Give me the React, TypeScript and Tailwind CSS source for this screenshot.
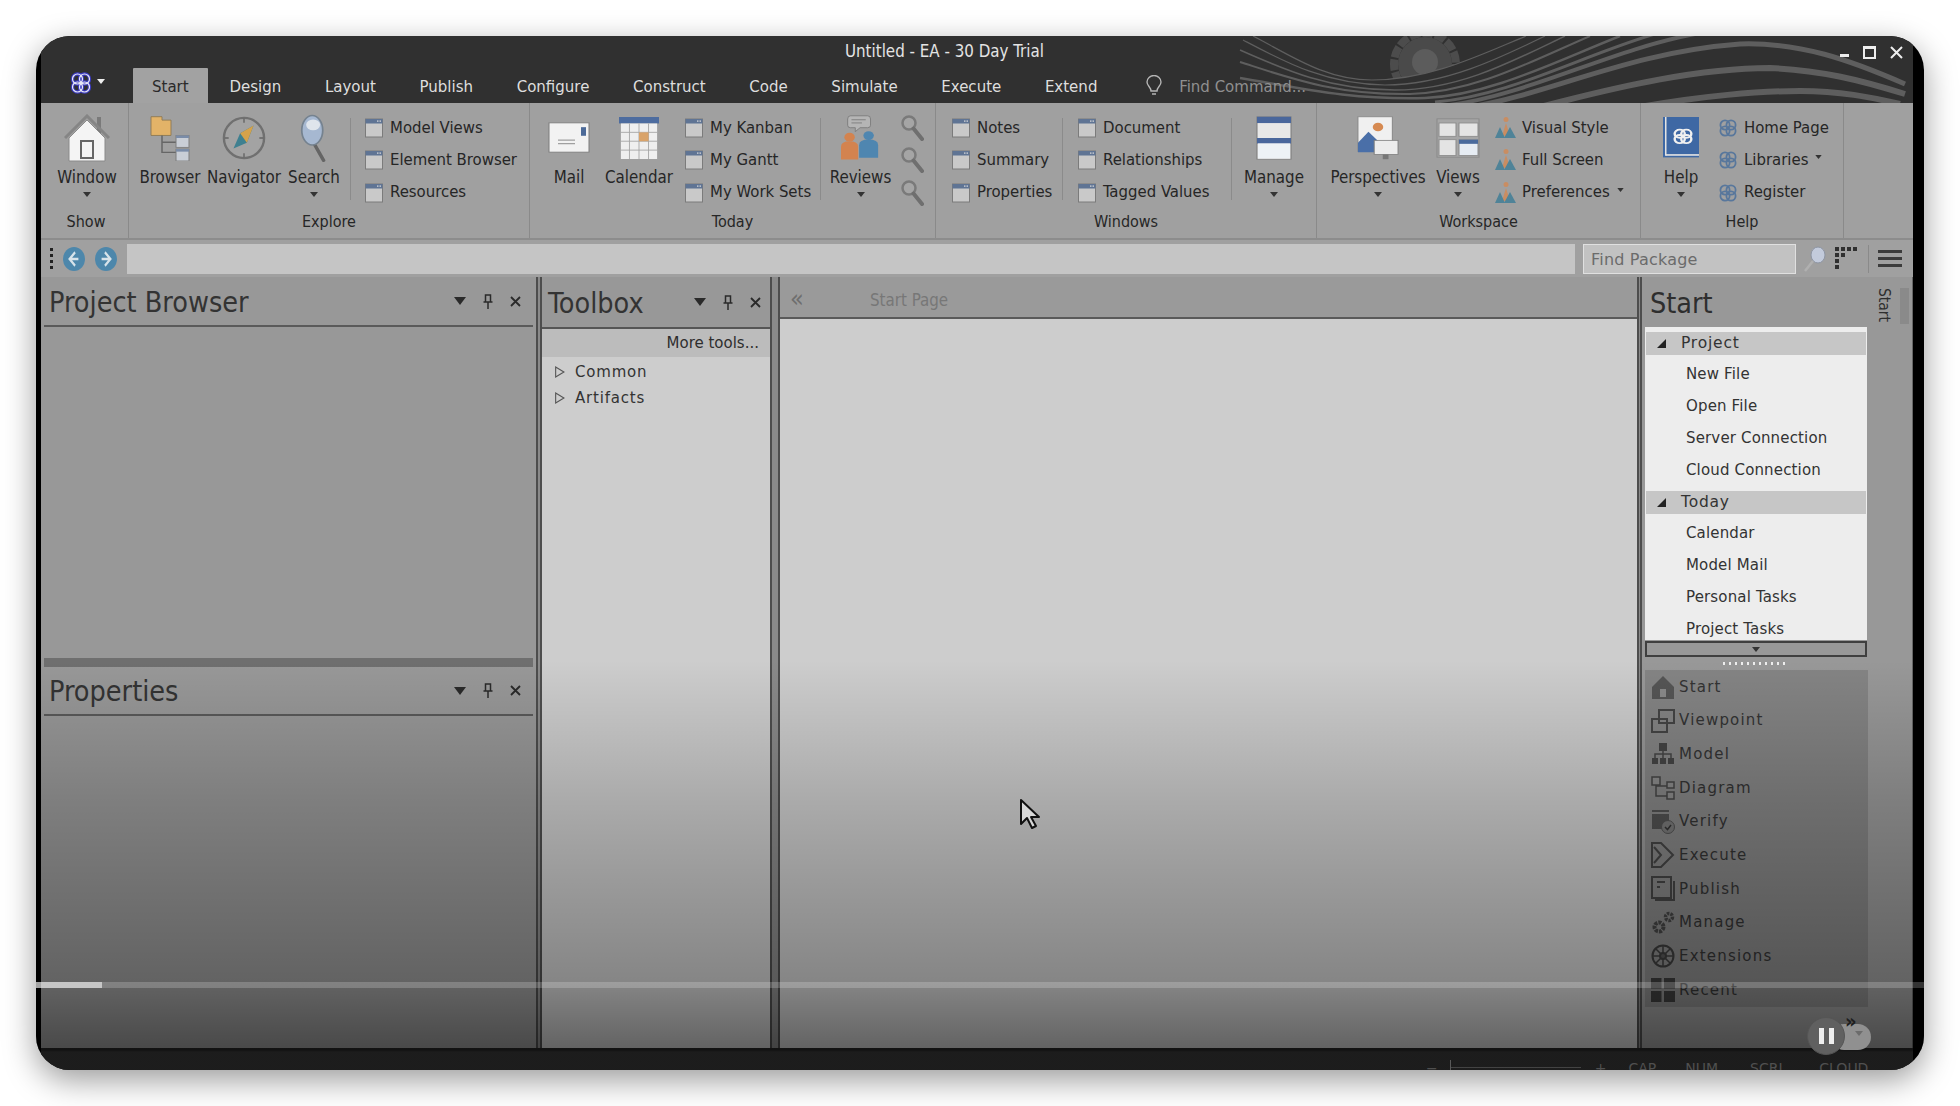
import React from "react";

const F = "font-['DejaVu_Sans_Condensed','DejaVu_Sans',sans-serif]";

const Logo = ({ s = 20, c = "#3d3fa8", bg = "none", w = 2 }: { s?: number; c?: string; bg?: string; w?: number }) => (
  <svg width={s} height={s} viewBox="0 0 20 20" fill={bg} stroke={c} strokeWidth={w}>
    <circle cx="7" cy="7" r="4.6" />
    <circle cx="13" cy="7" r="4.6" />
    <circle cx="7" cy="13" r="4.6" />
    <circle cx="13" cy="13" r="4.6" />
  </svg>
);

const AppLogo = () => (
  <svg width="22" height="24" viewBox="0 0 22 24" fill="none">
    <g stroke="#3c3cc0" strokeWidth="3.4">
      <circle cx="7.5" cy="8" r="5" /><circle cx="14.5" cy="8" r="5" /><circle cx="7.5" cy="16" r="5" /><circle cx="14.5" cy="16" r="5" />
    </g>
    <g stroke="#e8e8f4" strokeWidth="1.2">
      <circle cx="7.5" cy="8" r="5" /><circle cx="14.5" cy="8" r="5" /><circle cx="7.5" cy="16" r="5" /><circle cx="14.5" cy="16" r="5" />
    </g>
  </svg>
);

const WinIcon = () => (
  <svg width="18" height="20" viewBox="0 0 18 20" className="shrink-0">
    <rect x="0.5" y="1" width="17" height="18" fill="#c9c9c9" stroke="#7b7b7b" />
    <rect x="0.5" y="1" width="17" height="4.5" fill="#5f7494" />
    <rect x="12" y="2.5" width="1.5" height="1.2" fill="#ddd" />
    <rect x="14.5" y="2.5" width="1.5" height="1.2" fill="#ddd" />
  </svg>
);

const PersonIcon = () => (
  <svg width="21" height="24" viewBox="0 0 21 24" className="shrink-0">
    <circle cx="11" cy="3.5" r="2.5" fill="#c98d62" />
    <path d="M7 20 L11 7 L15 20Z" fill="#c98d62" />
    <path d="M0 22 L5 11 L10 22Z" fill="#4f8398" />
    <path d="M9 22 L15 11 L21 22Z" fill="#4f8398" />
  </svg>
);

const MagIcon = ({ w = 24, h = 28 }: { w?: number; h?: number }) => (
  <svg width={w} height={h} viewBox="0 0 24 28" fill="none">
    <circle cx="9" cy="9" r="6.5" stroke="#7a7a7a" strokeWidth="2.5" fill="#a5a5a5" />
    <path d="M13.5 14.5 L22 25" stroke="#6f6f6f" strokeWidth="4" strokeLinecap="round" />
  </svg>
);

const Caret = ({ c = "#333", s = 8 }: { c?: string; s?: number }) => (
  <svg width={s} height={s - 3} viewBox="0 0 8 5"><path d="M0 0H8L4 5Z" fill={c} /></svg>
);

const House = () => (
  <svg width="46" height="48" viewBox="0 0 46 48">
    <rect x="33" y="3" width="4" height="16" fill="#7a7a7a" />
    <path d="M1 24 L23 2 L45 24" fill="none" stroke="#858585" strokeWidth="3" />
    <path d="M5 24 L23 6 L41 24 V47 H5Z" fill="#f4f4f4" stroke="#8a8a8a" />
    <rect x="17" y="27" width="12" height="17" fill="#f4f4f4" stroke="#666" strokeWidth="2" />
  </svg>
);
const FolderTree = () => (
  <svg width="40" height="46" viewBox="0 0 40 54" preserveAspectRatio="none">
    <path d="M1 2H12V6H21V24H1Z" fill="#e3b368" stroke="#8e7a55" />
    <path d="M12 24V44H26M12 32H26" fill="none" stroke="#666" strokeWidth="1.5" />
    <rect x="26" y="24" width="13" height="14" fill="#c9ced6" stroke="#7c7c7c" />
    <rect x="26" y="40" width="13" height="14" fill="#c9ced6" stroke="#7c7c7c" />
    <rect x="26" y="24" width="13" height="3" fill="#7a8ca8" />
    <rect x="26" y="40" width="13" height="3" fill="#7a8ca8" />
  </svg>
);
const Compass = () => (
  <svg width="44" height="46" viewBox="0 0 46 48">
    <circle cx="23" cy="24" r="21" fill="#a3a3a3" stroke="#707070" strokeWidth="2.5" />
    <path d="M33 11 L26 29 L12 35 L19 19Z" fill="#3f8090" />
    <path d="M33 11 L26 29 L19 19Z" fill="#d6a24a" />
    <path d="M23 4V8M23 40V44M3 24H7M39 24H43" stroke="#666" strokeWidth="1.5" />
  </svg>
);
const BigMag = () => (
  <svg width="28" height="48" viewBox="0 0 32 62" preserveAspectRatio="none">
    <path d="M17 40 L27 60" stroke="#656565" strokeWidth="4" strokeLinecap="round" />
    <ellipse cx="14" cy="21" rx="12" ry="19" fill="#a6b8d1" stroke="#75828f" strokeWidth="2" />
    <ellipse cx="15" cy="14" rx="8" ry="7" fill="#dfe5ec" />
  </svg>
);
const Mail = () => (
  <svg width="42" height="31" viewBox="0 0 42 36" preserveAspectRatio="none">
    <rect x="1" y="1" width="40" height="34" fill="#f2f2f2" stroke="#7c7c7c" />
    <rect x="33" y="6" width="5" height="10" fill="#4c6a98" />
    <path d="M10 21H27M10 25H27" stroke="#a0a0a0" strokeWidth="1.5" />
  </svg>
);
const Calendar = () => (
  <svg width="40" height="42" viewBox="0 0 42 52" preserveAspectRatio="none">
    <rect x="0" y="0" width="42" height="8" fill="#4d6c9f" />
    <rect x="2" y="8" width="38" height="44" fill="#efefef" />
    <path d="M2 19H40M2 30H40M2 41H40M11 8V52M21 8V52M31 8V52" stroke="#a4a4a4" />
    <rect x="21" y="19" width="10" height="11" fill="#d9a36a" />
  </svg>
);
const Reviews = () => (
  <svg width="40" height="46" viewBox="0 0 42 58" preserveAspectRatio="none">
    <path d="M10 1H28Q31 1 31 5V13Q31 16 28 16H20L15 21V16H10Q7 16 7 13V5Q7 1 10 1Z" fill="#b5b5b5" stroke="#7a7a7a" />
    <path d="M11 6H26M11 10H22" stroke="#7a7a7a" />
    <circle cx="9" cy="28" r="5.5" fill="#d3834f" />
    <path d="M0 56V40Q0 33 9 33Q18 33 18 40V56Z" fill="#d3834f" />
    <circle cx="29" cy="26" r="5.5" fill="#4f86b0" />
    <path d="M19 54V38Q19 31 29 31Q39 31 39 38V54Z" fill="#4f86b0" />
  </svg>
);
const Manage = () => (
  <svg width="36" height="44" viewBox="0 0 36 56" preserveAspectRatio="none">
    <rect x="1" y="1" width="34" height="54" fill="#e8e8e8" stroke="#7a7a7a" />
    <rect x="1" y="1" width="34" height="8" fill="#4a679c" />
    <rect x="1" y="28" width="34" height="7" fill="#4a679c" />
    <rect x="2" y="35" width="32" height="19" fill="#eef2f6" />
  </svg>
);
const Perspectives = () => (
  <svg width="42" height="44" viewBox="0 0 44 56" preserveAspectRatio="none">
    <rect x="1" y="1" width="36" height="44" fill="#f0f0f0" stroke="#858585" />
    <circle cx="22" cy="14" r="5.5" fill="#d68a52" />
    <path d="M1 46V34L12 20L24 34V46Z" fill="#4a6fa8" />
    <rect x="18" y="31" width="25" height="18" fill="#ececec" stroke="#7d7d7d" />
    <rect x="27" y="49" width="6" height="6" fill="#777" />
  </svg>
);
const Views = () => (
  <svg width="44" height="40" viewBox="0 0 44 48" preserveAspectRatio="none">
    <rect x="1" y="1" width="42" height="46" fill="#a6a6a6" stroke="#888" />
    <rect x="3" y="6" width="17" height="16" fill="#e4e4e4" stroke="#8a8a8a" />
    <rect x="23" y="6" width="19" height="16" fill="#e4e4e4" stroke="#8a8a8a" />
    <rect x="3" y="26" width="17" height="19" fill="#e4e4e4" stroke="#8a8a8a" />
    <rect x="23" y="26" width="19" height="19" fill="#e6ecf3" stroke="#8a8a8a" />
    <rect x="23" y="26" width="19" height="5" fill="#4a6a9c" />
  </svg>
);
const HelpBook = () => (
  <svg width="36" height="42" viewBox="0 0 36 52" preserveAspectRatio="none">
    <rect x="0" y="0" width="36" height="50" fill="#3e68a4" />
    <rect x="3" y="46" width="33" height="2" fill="#e4e4e4" />
    <rect x="2" y="0" width="1.5" height="48" fill="#e4e4e4" />
    <g transform="translate(9,13)"><Logo s={22} c="#f0f0f0" w={2.2} /></g>
  </svg>
);

const Large = ({ label, icon, caret, w }: { label: string; icon: React.ReactNode; caret?: boolean; w: string }) => (
  <div className={`flex flex-col items-center shrink-0 ${w}`}>
    <div className="h-[59px] flex items-center justify-center">{icon}</div>
    <div className="text-[16.8px] leading-[20px] text-[#262626] whitespace-nowrap">{label}</div>
    {caret && <div className="mt-[5px]"><Caret /></div>}
  </div>
);

const Sep = ({ ml }: { ml: string }) => <div className={`w-px h-[82px] mt-[10px] bg-[#8b8b8b] shrink-0 ${ml}`} />;

const Small = ({ items, icon, cls, gap = "gap-[7px]" }: { items: string[]; icon: React.ReactNode; cls: string; gap?: string }) => (
  <div className={`flex flex-col pt-[4px] shrink-0 ${cls}`}>
    {items.map((t) => (
      <div key={t} className={`h-[32.3px] flex items-center ${gap} text-[16.6px] text-[#262626] whitespace-nowrap`}>
        {icon}
        <span>{t.replace(" ▾", "")}</span>
        {t.endsWith("▾") && <span className="ml-[1px] mb-[6px]"><Caret s={7} /></span>}
      </div>
    ))}
  </div>
);

const Group = ({ w, label, children }: { w: string; label: string; children: React.ReactNode }) => (
  <div className={`flex flex-col h-[135px] border-r border-[#8a8a8a] shrink-0 ${w}`}>
    <div className="flex h-[109px] pt-[5px]">{children}</div>
    <div className="text-center text-[16px] leading-[20px] text-[#262626]">{label}</div>
  </div>
);

const PanelHead = ({ title, line = true, cls, pr = "pr-[12px]" }: { title: string; line?: boolean; cls: string; pr?: string }) => (
  <div className={`flex items-center shrink-0 ${line ? "border-b-2 border-[#5a5a5a]" : ""} ${cls}`}>
    <span className="text-[28.5px] text-[#333] pl-[5px] leading-none pt-[4px]">{title}</span>
    <div className={`ml-auto flex items-center gap-[17px] text-[#222] ${pr}`}>
      <svg width="12" height="8" viewBox="0 0 12 8"><path d="M0 0H12L6 8Z" fill="#2a2a2a" /></svg>
      <svg width="10" height="15" viewBox="0 0 10 15" fill="none" stroke="#2a2a2a" strokeWidth="1.5"><path d="M2.5 1H7.5V8H2.5ZM0.5 8H9.5M5 8V15" /></svg>
      <svg width="11" height="11" viewBox="0 0 11 11" stroke="#2a2a2a" strokeWidth="1.8"><path d="M1 1L10 10M10 1L1 10" /></svg>
    </div>
  </div>
);

const VSep = ({ w }: { w: string }) => (
  <div className={`shrink-0 bg-[#8a8a8a] border-x-2 border-[#4d4d4d] ${w}`} />
);

const Tri = () => (
  <svg width="11" height="12" viewBox="0 0 10 10" fill="none" stroke="#555" strokeWidth="1"><path d="M1.5 0.5L9 5L1.5 9.5Z" /></svg>
);

const Corner = () => (
  <svg width="9" height="9" viewBox="0 0 9 9"><path d="M9 0V9H0Z" fill="#222" /></svg>
);

const navIcons: Record<string, React.ReactNode> = {
  Start: (
    <svg width="24" height="24" viewBox="0 0 24 24"><path d="M1 12L12 1L23 12V24H1Z" fill="#555" /><rect x="9" y="14" width="6" height="8" fill="#8a8a8a" /></svg>
  ),
  Viewpoint: (
    <svg width="24" height="24" viewBox="0 0 24 24" fill="none" stroke="#444" strokeWidth="2"><rect x="8" y="1" width="15" height="13" /><rect x="1" y="10" width="15" height="13" /></svg>
  ),
  Model: (
    <svg width="24" height="22" viewBox="0 0 24 22" fill="#444"><rect x="8" y="0" width="8" height="8" /><rect x="1" y="15" width="6" height="6" /><rect x="9" y="15" width="6" height="6" /><rect x="17" y="15" width="6" height="6" /><path d="M4 15V11H20V15M12 8V15" fill="none" stroke="#444" strokeWidth="1.5" /></svg>
  ),
  Diagram: (
    <svg width="24" height="24" viewBox="0 0 24 24" fill="#8a8a8a" stroke="#444" strokeWidth="1.5"><rect x="1" y="1" width="8" height="8" /><rect x="16" y="6" width="7" height="6" /><rect x="16" y="16" width="7" height="7" /><path d="M5 9V20H16M5 10H16" fill="none" /></svg>
  ),
  Verify: (
    <svg width="24" height="24" viewBox="0 0 24 24"><rect x="1" y="4" width="17" height="15" fill="#505050" /><rect x="1" y="0" width="17" height="2" fill="#505050" /><circle cx="17" cy="17" r="6.5" fill="#777" stroke="#505050" /><path d="M14 17L16.5 19.5L20 15" fill="none" stroke="#333" strokeWidth="1.5" /></svg>
  ),
  Execute: (
    <svg width="24" height="26" viewBox="0 0 24 26" fill="none" stroke="#444" strokeWidth="2"><path d="M1 1H10L22 13L10 25H1Z" /><path d="M3 5L10 13L3 21" /></svg>
  ),
  Publish: (
    <svg width="24" height="26" viewBox="0 0 24 26" fill="none" stroke="#444" strokeWidth="2"><rect x="1" y="1" width="19" height="21" /><path d="M4 24H23V5M6 6H14M6 11H9" /></svg>
  ),
  Manage: (
    <svg width="24" height="24" viewBox="0 0 24 24" fill="none" stroke="#444"><circle cx="8" cy="16" r="4.5" strokeWidth="4" strokeDasharray="3 1" /><circle cx="18" cy="6" r="3.5" strokeWidth="3.5" strokeDasharray="2.5 1" /></svg>
  ),
  Extensions: (
    <svg width="24" height="24" viewBox="0 0 24 24" fill="none" stroke="#3c3c3c" strokeWidth="2"><circle cx="12" cy="12" r="10.5" /><path d="M5 5L19 19M19 5L5 19M12 2V22M2 12H22" strokeWidth="1.5" /><circle cx="12" cy="12" r="3" fill="#555" /></svg>
  ),
  Recent: (
    <svg width="24" height="24" viewBox="0 0 24 24" fill="#3c3c3c"><rect x="0" y="0" width="10.5" height="10.5" /><rect x="13" y="0" width="11" height="10.5" /><rect x="0" y="13" width="10.5" height="11" /><rect x="13" y="13" width="11" height="11" /></svg>
  ),
};

export default function App() {
  return (
    <div className="w-[1960px] h-[1106px] bg-white pt-[36px] pl-[36px] overflow-hidden">
      <div className={`relative w-[1888px] h-[1034px] rounded-[34px] overflow-hidden bg-black pl-[5px] pr-[11px] shadow-[0_10px_32px_rgba(0,0,0,0.4)] ${F}`}>
        <div className="relative bg-[#303030] h-[67px] pl-[0px] pr-[0px]">
          <svg className="absolute -left-[0px] top-0" width="1872" height="67" viewBox="41 36 1872 67" fill="none">
            <circle cx="1425" cy="64" r="31" fill="none" stroke="#4c4c4c" strokeWidth="8" strokeDasharray="11 2" />
            <circle cx="1425" cy="64" r="27" fill="#4a4a4a" />
            <circle cx="1425" cy="62" r="13" fill="#5c5c5c" />
            <path d="M1372 80 C1430 80 1480 55 1526 36 V103 H1372Z" fill="#303030" />
            <g stroke="#5e5e5e">
              <path strokeWidth="1.2" d="M1253 36 C1290 55 1325 80 1372 80 C1430 80 1480 55 1526 36" />
              <path strokeWidth="1.2" d="M1243 40 C1285 62 1325 84 1385 85 C1445 85 1500 58 1545 36" />
              <path strokeWidth="1.5" d="M1240 50 C1285 70 1330 90 1395 90 C1460 90 1515 60 1565 36" />
              <path strokeWidth="2" d="M1240 62 C1290 78 1335 95 1410 94 C1475 92 1530 62 1590 36" />
              <path strokeWidth="2.5" d="M1240 78 C1300 88 1350 100 1425 98 C1490 95 1550 64 1620 36" />
              <path strokeWidth="3" d="M1435 102 C1510 96 1580 56 1655 34" />
              <path strokeWidth="4" d="M1450 105 C1530 94 1610 50 1695 34" />
              <path strokeWidth="5" d="M1470 107 C1550 94 1630 52 1740 44 C1800 42 1850 60 1905 84" />
              <path strokeWidth="6" d="M1540 107 C1620 86 1700 68 1770 68 C1820 70 1860 80 1905 94" />
              <path strokeWidth="6" d="M1640 107 C1700 96 1760 91 1800 91 C1840 91 1870 97 1900 104" />
            </g>
          </svg>
          <div className="relative flex items-center h-[32px] text-[16.8px]">
            <div className="w-[804px] shrink-0" />
            <span className="text-[#e4e4e4] whitespace-nowrap">Untitled - EA - 30 Day Trial</span>
            <div className="ml-auto flex items-center gap-[14px] pr-[10px] text-[#eee]">
              <div className="w-[9px] h-[3px] bg-[#eee] mt-[7px]" />
              <div className="w-[13px] h-[13px] border-2 border-[#eee] border-t-[3px]" />
              <svg width="13" height="13" viewBox="0 0 13 13" stroke="#eee" strokeWidth="2"><path d="M1 1L12 12M12 1L1 12" /></svg>
            </div>
          </div>
          <div className="relative flex items-end h-[35px] text-[16.7px] text-[#dedede]">
            <div className="w-[92px] h-full shrink-0 flex items-start pl-[29px] pt-[3px] gap-[5px]">
              <AppLogo />
              <div className="mt-[8px]"><Caret c="#eee" s={8} /></div>
            </div>
            <div className="h-full flex items-center pt-[3px] px-[19px] bg-[#a2a2a2] text-[#2a2a2a] rounded-t-[1px]">Start</div>
            {["Design", "Layout", "Publish", "Configure", "Construct", "Code", "Simulate", "Execute", "Extend"].map((t) => (
              <div key={t} className="h-full flex items-center pt-[3px] px-[21.8px]">{t}</div>
            ))}
            <div className="h-full flex items-center pt-[1px] pl-[27px] gap-[17px] text-[#8f8f8f]">
              <svg width="16" height="22" viewBox="0 0 16 22" fill="none" stroke="#b4b4b4" strokeWidth="1.4"><path d="M5 16C5 12 1 11 1 7A7 6.5 0 0 1 15 7C15 11 11 12 11 16ZM6 19H10" /></svg>
              <span className="pt-[2px]">Find Command...</span>
            </div>
          </div>
        </div>

        <div className="flex h-[135px] bg-[#a0a0a0] pl-[3px]">
          <Group w="w-[85px]" label="Show">
            <div className="w-[4px]" />
            <Large w="w-[82px]" label="Window" icon={<House />} caret />
          </Group>
          <Group w="w-[401px]" label="Explore">
            <div className="w-[4px]" />
            <Large w="w-[74px]" label="Browser" icon={<FolderTree />} />
            <Large w="w-[74px]" label="Navigator" icon={<Compass />} />
            <Large w="w-[66px]" label="Search" icon={<BigMag />} caret />
            <Sep ml="ml-[3px]" />
            <Small cls="ml-[14px]" items={["Model Views", "Element Browser", "Resources"]} icon={<WinIcon />} />
          </Group>
          <Group w="w-[406px]" label="Today">
            <div className="w-[9px]" />
            <Large w="w-[60px]" label="Mail" icon={<Mail />} />
            <Large w="w-[80px]" label="Calendar" icon={<Calendar />} />
            <Small cls="ml-[6px] w-[130px]" items={["My Kanban", "My Gantt", "My Work Sets"]} icon={<WinIcon />} />
            <Sep ml="ml-[5px]" />
            <Large w="w-[79px]" label="Reviews" icon={<Reviews />} caret />
            <div className="flex flex-col pt-[4px] w-[30px]">
              {[0, 1, 2].map((i) => (
                <div key={i} className="h-[32.3px] flex items-center"><MagIcon /></div>
              ))}
            </div>
          </Group>
          <Group w="w-[381px]" label="Windows">
            <Small cls="ml-[16px] w-[105px]" items={["Notes", "Summary", "Properties"]} icon={<WinIcon />} />
            <Sep ml="ml-[5px]" />
            <Small cls="ml-[15px] w-[148px]" items={["Document", "Relationships", "Tagged Values"]} icon={<WinIcon />} />
            <Sep ml="ml-[5px]" />
            <Large w="w-[84px]" label="Manage" icon={<Manage />} caret />
          </Group>
          <Group w="w-[324px]" label="Workspace">
            <div className="w-[11px]" />
            <Large w="w-[100px]" label="Perspectives" icon={<Perspectives />} caret />
            <Large w="w-[60px]" label="Views" icon={<Views />} caret />
            <Small cls="ml-[7px]" gap="gap-[6px]" items={["Visual Style", "Full Screen", "Preferences ▾"]} icon={<PersonIcon />} />
          </Group>
          <Group w="w-[203px]" label="Help">
            <div className="w-[15px]" />
            <Large w="w-[50px]" label="Help" icon={<HelpBook />} caret />
            <Small cls="ml-[12px]" gap="gap-[6px]" items={["Home Page", "Libraries ▾", "Register"]} icon={<Logo s={20} c="#58779c" w={1.8} />} />
          </Group>
        </div>

        <div className="flex items-center h-[39px] bg-[#a0a0a0] pl-[9px] border-t-2 border-[#8c8c8c]">
          <div className="flex flex-col gap-[3px] w-[4px]">
            {[0, 1, 2, 3].map((i) => <div key={i} className="w-[3px] h-[3px] bg-[#222]" />)}
          </div>
          <div className="flex gap-[10px] ml-[9px]">
            {["M11 3.5L6 8L11 12.5M6 8H14", "M9 3.5L14 8L9 12.5M14 8H6"].map((d) => (
              <svg key={d} width="22" height="24" viewBox="0 0 20 16" preserveAspectRatio="none"><ellipse cx="10" cy="8" rx="10" ry="8" fill="#4d87ab" /><path d={d} fill="none" stroke="#d7e3ea" strokeWidth="1.8" /></svg>
            ))}
          </div>
          <div className="w-[1448px] h-[30px] bg-[#c5c5c5] ml-[10px]" />
          <div className="w-[213px] h-[30px] bg-[#c2c2c2] border border-[#e0e0e0] ml-[8px] flex items-center pl-[7px] pt-[2px] text-[16px] text-[#6b6b6b] font-['DejaVu_Sans',sans-serif] tracking-[0.2px]">Find Package</div>
          <svg className="ml-[7px]" width="24" height="26" viewBox="0 0 24 26" fill="none"><ellipse cx="15" cy="9" rx="7" ry="8" fill="#c3cbdc" stroke="#8d94a2" /><path d="M10 15L2 25" stroke="#b0b0b0" strokeWidth="2.5" /></svg>
          <svg className="ml-[8px]" width="24" height="26" viewBox="0 0 24 26" fill="#303030">
            {[0, 6, 12, 18].map((x) => <rect key={x} x={x} y="1" width="4" height="4" />)}
            {[0, 6].map((x) => <rect key={x} x={x} y="7" width="4" height="4" />)}
            <rect x="0" y="13" width="4" height="4" /><rect x="0" y="19" width="4" height="4" />
          </svg>
          <div className="w-px h-[28px] bg-[#8a8a8a] ml-[9px]" />
          <div className="ml-[9px] flex flex-col gap-[4px]">
            {[0, 1, 2].map((i) => <div key={i} className="w-[24px] h-[3px] bg-[#3c3c3c]" />)}
          </div>
        </div>

        <div className="flex h-[771px] bg-[#989898]">
          <div className="w-[495px] shrink-0 flex flex-col px-[3px] bg-[#989898]">
            <PanelHead title="Project Browser" cls="h-[50px]" />
            <div className="h-[331px] shrink-0" />
            <div className="h-[9px] bg-[#6f6f6f] shrink-0" />
            <PanelHead title="Properties" cls="h-[49px]" />
          </div>
          <VSep w="w-[6px]" />
          <div className="w-[228px] shrink-0 flex flex-col bg-[#989898]">
            <PanelHead title="Toolbox" line={false} cls="h-[50px] pl-[1px]" pr="pr-[9px]" />
            <div className="flex-1 bg-[#cdcdcd]">
              <div className="h-[30px] bg-[#bcbcbc] flex items-center justify-end pr-[11px] text-[15px] text-[#2e2e2e] border-t-2 border-[#555] font-['DejaVu_Sans',sans-serif]">More tools...</div>
              <div className="pt-[2px] pl-[12px] text-[15px] text-[#333] tracking-[0.8px] font-['DejaVu_Sans',sans-serif]">
                {["Common", "Artifacts"].map((t) => (
                  <div key={t} className="h-[26px] flex items-center gap-[10px]"><Tri />{t}</div>
                ))}
              </div>
            </div>
          </div>
          <VSep w="w-[10px]" />
          <div className="w-[857px] shrink-0 flex flex-col">
            <div className="h-[42px] bg-[#9a9a9a] border-b-2 border-[#5a5a5a] flex items-center pt-[7px] text-[16.8px] text-[#777] shrink-0">
              <span className="pl-[10px] w-[90px] text-[25px] leading-none text-[#6e6e6e] pb-[4px]">«</span>
              <span>Start Page</span>
            </div>
            <div className="flex-1 bg-[#cdcdcd]" />
          </div>
          <VSep w="w-[5px]" />
          <div className="flex-1 flex bg-[#989898] border-r border-[#666]">
            <div className="w-[226px] shrink-0 pl-[3px] flex flex-col">
              <div className="h-[50px] flex items-center pl-[5px] pt-[5px] text-[28.5px] text-[#2e2e2e] leading-none">Start</div>
              <div className="h-[313px] bg-[#ededed] overflow-hidden pt-[5px] text-[15px] text-[#333] font-['DejaVu_Sans',sans-serif] w-[222px] tracking-[0.15px]">
                {[
                  ["Project", ["New File", "Open File", "Server Connection", "Cloud Connection"]],
                  ["Today", ["Calendar", "Model Mail", "Personal Tasks", "Project Tasks"]],
                ].map(([h, its]) => (
                  <div key={h as string}>
                    <div className="h-[23px] bg-[#c6c6c6] flex items-center pl-[11px] gap-[15px] mx-[1px] mb-[3px] text-[15.5px] tracking-[0.8px]"><Corner />{h as string}</div>
                    <div className="pl-[41px] pb-[4px]">
                      {(its as string[]).map((t) => (
                        <div key={t} className="h-[32.2px] flex items-center">{t}</div>
                      ))}
                    </div>
                  </div>
                ))}
              </div>
              <div className="h-[16px] w-[222px] mt-[1px] border-2 border-[#3f3f3f] flex items-center justify-center"><Caret s={8} /></div>
              <div className="h-[13px] w-[218px] flex items-center justify-center gap-[3.5px]">
                {Array.from({ length: 11 }).map((_, i) => <div key={i} className="w-[2.5px] h-[3px] bg-[#eee]" />)}
              </div>
              <div className="w-[223px] bg-[#848484] text-[15px] text-[#333] font-['DejaVu_Sans',sans-serif] tracking-[1.2px]">
                {Object.keys(navIcons).map((t) => (
                  <div key={t} className="h-[33.7px] flex items-center pl-[6px] gap-[4px]">
                    <div className="w-[24px] flex justify-center">{navIcons[t]}</div>{t}
                  </div>
                ))}
              </div>
            </div>
            <div className="flex-1 flex pt-[11px] pl-[4px] gap-[5px]">
              <span className="[writing-mode:vertical-rl] text-[15.5px] text-[#2e2e2e] h-[36px]">Start</span>
              <div className="w-[9px] h-[36px] bg-[#8a8a8a]" />
            </div>
          </div>
        </div>

        <div className="h-[22px] bg-[#262626] flex items-end overflow-hidden text-[14px] leading-none text-[#6a6a6a] font-['DejaVu_Sans',sans-serif] pl-[1385px]">
          <span className="mb-[-5px]">−</span>
          <div className="relative w-[131px] h-px bg-[#5a5a5a] mb-[2px] ml-[12px]"><div className="absolute left-0 -top-[7px] w-px h-[10px] bg-[#777]" /></div>
          <span className="mb-[-5px] ml-[14px]">+</span>
          <span className="mb-[-5px] ml-[22px]">CAP</span>
          <span className="mb-[-5px] ml-[29px]">NUM</span>
          <span className="mb-[-5px] ml-[32px]">SCRL</span>
          <span className="mb-[-5px] ml-[33px]">CLOUD</span>
        </div>

        {/* video player overlay */}
        <div className="absolute left-0 right-0 top-[624px] bottom-0 pointer-events-none bg-[linear-gradient(to_bottom,rgba(0,0,0,0)_0px,rgba(0,0,0,0.17)_140px,rgba(0,0,0,0.35)_322px,rgba(0,0,0,0.52)_390px,rgba(0,0,0,0.25)_392px,rgba(0,0,0,0.25)_100%)]" />
        <div className="absolute left-0 right-0 top-[946px] h-[6px] bg-[rgba(255,255,255,0.2)] pointer-events-none">
          <div className="w-[66px] h-full bg-[rgba(255,255,255,0.55)]" />
        </div>
        <svg className="absolute left-[983px] top-[762px]" width="24" height="32" viewBox="0 0 24 32">
          <path d="M2 2V26L8 20L13 30L17 28L12 19H20Z" fill="#d8d8d8" stroke="#111" strokeWidth="2" strokeLinejoin="round" />
        </svg>
        <div className="absolute left-[1795px] top-[988px] h-[26px] w-[40px] rounded-full bg-[#909090] flex items-center justify-end pr-[8px]">
          <div className="mb-[8px]"><Caret c="#6c6c6c" s={8} /></div>
        </div>
        <div className="absolute left-[1771px] top-[981px] w-[38px] h-[38px] rounded-full bg-[#606060] border border-[#555] flex items-center justify-center gap-[5px]">
          <div className="w-[5px] h-[16px] bg-[#eee]" /><div className="w-[5px] h-[16px] bg-[#eee]" />
        </div>
        <span className="absolute left-[1809px] top-[975px] text-[20px] leading-none text-[#1e1e1e] font-bold">»</span>
      </div>
    </div>
  );
}
